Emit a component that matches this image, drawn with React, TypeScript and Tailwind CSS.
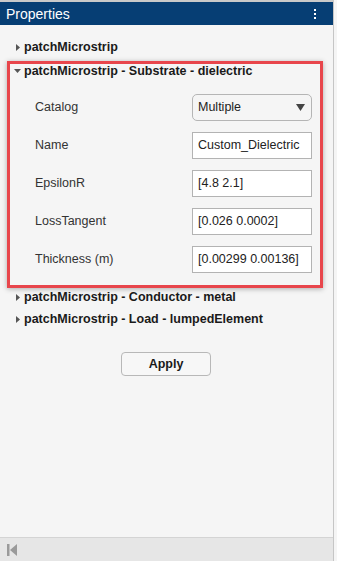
import React from "react";

const fields = [
  { label: "Name", value: "Custom_Dielectric" },
  { label: "EpsilonR", value: "[4.8 2.1]" },
  { label: "LossTangent", value: "[0.026 0.0002]" },
  { label: "Thickness (m)", value: "[0.00299 0.00136]" },
];

const CaretRight = () => (
  <svg width="4" height="7" viewBox="0 0 4 7" className="shrink-0">
    <path d="M0 0 L4 3.5 L0 7 Z" fill="#555" />
  </svg>
);

const CaretDown = () => (
  <svg width="7" height="4" viewBox="0 0 7 4" className="shrink-0">
    <path d="M0 0 L7 0 L3.5 4 Z" fill="#555" />
  </svg>
);

const SectionRow = ({ title, open }: { title: string; open?: boolean }) => (
  <div className="flex items-center h-[18px] pl-[14px] gap-[3px]">
    <div className="w-[7px] flex justify-center">{open ? <CaretDown /> : <CaretRight />}</div>
    <span className="font-bold text-[12.5px] text-[#1a1a1a] leading-none">{title}</span>
  </div>
);

const App = () => {
  return (
    <div className="w-[337px] h-[561px] bg-[#f5f5f5] font-['Liberation_Sans',Arial,sans-serif] overflow-hidden">
      <div className="w-[334px] h-full flex flex-col border-r border-[#c6c6c6]">
        <div className="h-[2px] bg-[#c9c9c9]" />
        <div className="h-[23px] bg-[#063e74] flex items-center justify-between pl-[6px] pr-[17px]">
          <span className="text-white text-[14px] leading-none">Properties</span>
          <div className="flex flex-col gap-[2px]">
            <div className="w-[2px] h-[2px] bg-white" />
            <div className="w-[2px] h-[2px] bg-white" />
            <div className="w-[2px] h-[2px] bg-white" />
          </div>
        </div>

        <div className="pt-[13px]">
          <SectionRow title="patchMicrostrip" />
        </div>

        <div className="mt-[5px] ml-[7px] w-[316px] border-[3px] border-[#e8464c] shadow-[0_1px_5px_rgba(0,0,0,0.3)] pb-[12px]">
          <div className="-ml-[10px] h-[14px] flex items-center">
            <SectionRow title="patchMicrostrip - Substrate - dielectric" open />
          </div>
          <div className="flex flex-col gap-[11px] mt-[16px] pl-[25px] pr-[8px]">
            <div className="flex items-center justify-between h-[27px]">
              <span className="text-[12.5px] text-[#333]">Catalog</span>
              <div className="w-[120px] h-[27px] rounded-[5px] border border-[#b5b5b5] bg-[#f5f5f5] flex items-center justify-between pl-[5px] pr-[6px]">
                <span className="text-[12.5px] text-[#222]">Multiple</span>
                <svg width="9" height="7" viewBox="0 0 9 7">
                  <path d="M0 0 L9 0 L4.5 7 Z" fill="#444" />
                </svg>
              </div>
            </div>
            {fields.map((f) => (
              <div key={f.label} className="flex items-center justify-between h-[27px]">
                <span className="text-[12.5px] text-[#333]">{f.label}</span>
                <div className="w-[120px] h-[27px] border border-[#b3b3b3] bg-white flex items-center pl-[5px]">
                  <span className="text-[12.5px] text-[#222] whitespace-nowrap">{f.value}</span>
                </div>
              </div>
            ))}
          </div>
        </div>

        <div className="mt-0">
          <SectionRow title="patchMicrostrip - Conductor - metal" />
        </div>
        <div className="mt-[4px]">
          <SectionRow title="patchMicrostrip - Load - lumpedElement" />
        </div>

        <div className="flex justify-center mt-[24px] pr-[1px]">
          <button className="w-[90px] h-[24px] rounded-[4px] border border-[#b8b8b8] bg-[#f7f7f7] text-[12.5px] font-bold text-[#1a1a1a]">
            Apply
          </button>
        </div>

        <div className="mt-auto h-[24px] border-t border-[#d4d4d4] bg-[#e6e6e6] flex items-center pl-[7px]">
          <svg width="10" height="12" viewBox="0 0 10 12">
            <rect x="0" y="0" width="2.5" height="12" fill="#9a9a9a" />
            <path d="M10 0 L3 6 L10 12 Z" fill="#9a9a9a" />
          </svg>
        </div>
      </div>
    </div>
  );
};

export default App;
